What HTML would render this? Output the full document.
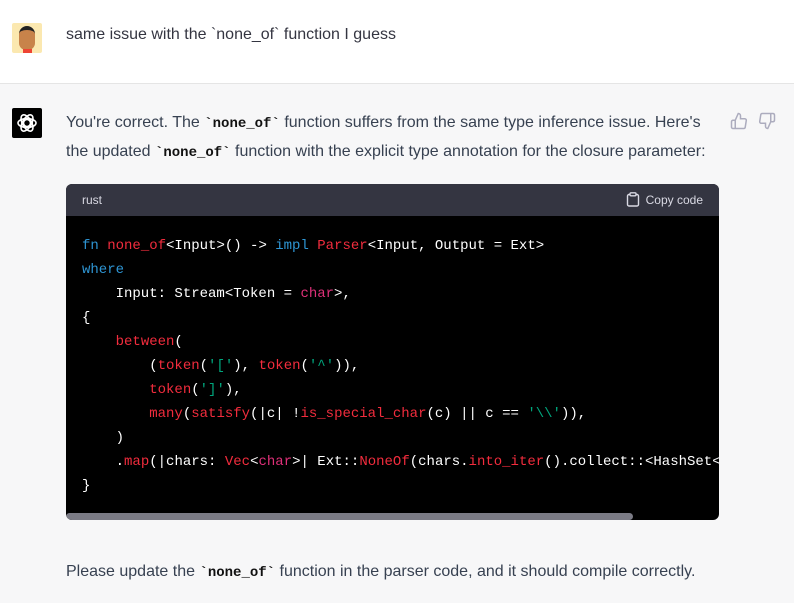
<!DOCTYPE html>
<html><head><style>
body{margin:0;width:794px;height:603px;overflow:hidden;font-family:"Liberation Sans",sans-serif;color:#374151;background:#f7f7f8;}
.u{position:absolute;left:0;top:0;width:794px;height:83px;background:#fff;border-bottom:1px solid #e5e5e5;}
.t{position:absolute;font-size:16px;line-height:28px;}
code.i{font-family:"Liberation Mono",monospace;font-weight:bold;font-size:14px;color:#111;}
.cb{position:absolute;left:66px;top:184px;width:653px;height:336px;background:#000;border-radius:6px;overflow:hidden;}
.hd{height:32px;background:#343541;color:#d9d9e3;font-size:12px;line-height:32px;padding:0 16px;position:relative;}
pre{margin:0;padding:18px 0 0 16px;font-family:"Liberation Mono",monospace;font-size:14px;line-height:24px;color:#fff;white-space:pre;}
.k{color:#2e95d3}.r{color:#f22c3d}.p{color:#df3079}.s{color:#00a67d}
.sb{position:absolute;left:0;bottom:0;width:567px;height:7px;background:#7b7b85;border-radius:4px;}
</style></head><body>
<div class="u"></div>
<div style="position:absolute;left:12px;top:23px;width:30px;height:30px;background:#fbe8b0;border-radius:2px;overflow:hidden">
<div style="position:absolute;left:7px;top:3px;width:16px;height:20px;background:#c8834a;border-radius:8px 8px 7px 7px;border-top:4px solid #222"></div>
<div style="position:absolute;left:11px;top:26px;width:9px;height:4px;background:#e43"></div></div>
<div class="t" style="left:66px;top:21px;color:#343541">same issue with the `none_of` function I guess</div>
<div style="position:absolute;left:12px;top:108px;width:30px;height:30px;background:#000;border-radius:2px;">
<svg width="30" height="30" viewBox="0 0 30 30"><g fill="none" stroke="#fff" stroke-width="1.6"><circle cx="15" cy="15" r="3.5"/><ellipse cx="15" cy="15" rx="9" ry="4.5"/><ellipse cx="15" cy="15" rx="9" ry="4.5" transform="rotate(60 15 15)"/><ellipse cx="15" cy="15" rx="9" ry="4.5" transform="rotate(120 15 15)"/></g></svg></div>
<div class="t" style="left:66px;top:109px;">You're correct. The <code class="i">`none_of`</code> function suffers from the same type inference issue. Here's<br>the updated <code class="i">`none_of`</code> function with the explicit type annotation for the closure parameter:</div>
<svg style="position:absolute;left:730px;top:112px" width="18" height="18" viewBox="0 0 24 24" fill="none" stroke="#acacbe" stroke-width="2"><path d="M14 9V5a3 3 0 0 0-3-3l-4 9v11h11.3a2 2 0 0 0 2-1.7l1.4-9A2 2 0 0 0 19.7 9zM7 22H4a2 2 0 0 1-2-2v-7a2 2 0 0 1 2-2h3"/></svg>
<svg style="position:absolute;left:758px;top:112px" width="18" height="18" viewBox="0 0 24 24" fill="none" stroke="#acacbe" stroke-width="2"><path d="M10 15v4a3 3 0 0 0 3 3l4-9V2H5.7a2 2 0 0 0-2 1.7l-1.4 9a2 2 0 0 0 2 2.3zm7-13h2.7A2.3 2.3 0 0 1 22 4v7a2.3 2.3 0 0 1-2.3 2H17"/></svg>
<div class="cb"><div class="hd">rust<span style="position:absolute;right:16px;top:0"><svg style="vertical-align:-3px;margin-right:6px" width="14" height="15" viewBox="0 0 14 15" fill="none" stroke="#d9d9e3" stroke-width="1.4"><rect x="1.5" y="2.5" width="11" height="11.5" rx="1.5"/><rect x="4" y="0.8" width="6" height="3" rx="1" fill="#343541"/></svg>Copy code</span></div>
<pre><span class="k">fn</span> <span class="r">none_of</span>&lt;Input&gt;() -&gt; <span class="k">impl</span> <span class="r">Parser</span>&lt;Input, Output = Ext&gt;
<span class="k">where</span>
    Input: Stream&lt;Token = <span class="p">char</span>&gt;,
{
    <span class="r">between</span>(
        (<span class="r">token</span>(<span class="s">'['</span>), <span class="r">token</span>(<span class="s">'^'</span>)),
        <span class="r">token</span>(<span class="s">']'</span>),
        <span class="r">many</span>(<span class="r">satisfy</span>(|c| !<span class="r">is_special_char</span>(c) || c == <span class="s">'\\'</span>)),
    )
    .<span class="r">map</span>(|chars: <span class="r">Vec</span>&lt;<span class="p">char</span>&gt;| Ext::<span class="r">NoneOf</span>(chars.<span class="r">into_iter</span>().collect::&lt;HashSet&lt;char&gt;&gt;()))
}</pre>
<div class="sb"></div></div>
<div class="t" style="left:66px;top:558px;">Please update the <code class="i">`none_of`</code> function in the parser code, and it should compile correctly.</div>
</body></html>
